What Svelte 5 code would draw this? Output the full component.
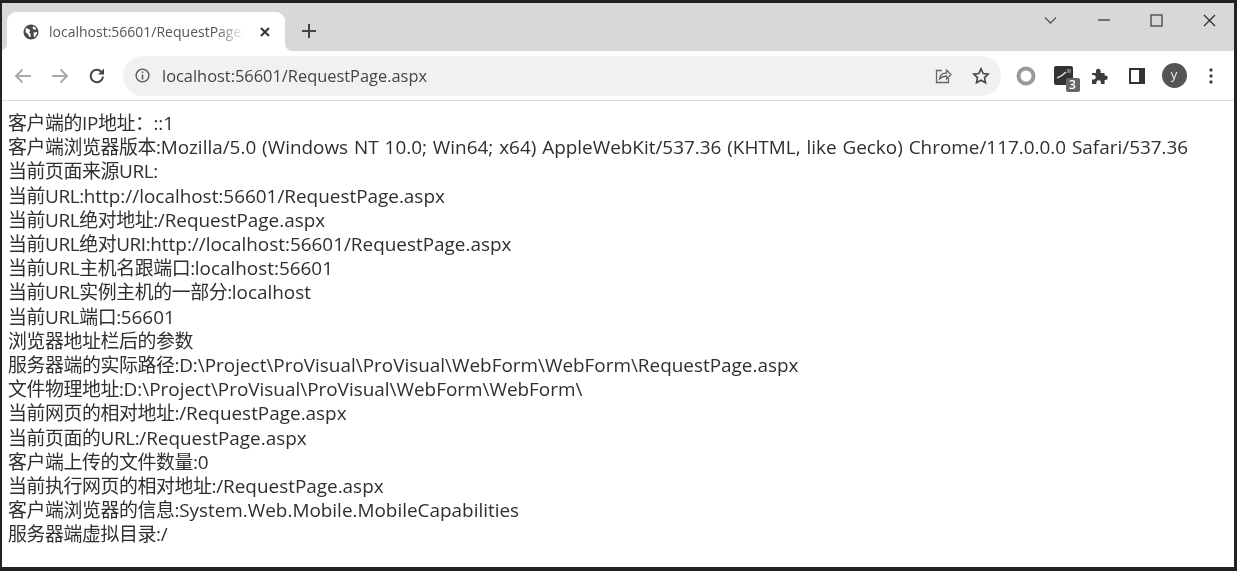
<script lang="ts">
  const lines = [
    ['客户端的IP地址：', '::1'],
    ['客户端浏览器版本:', 'Mozilla/5.0 (Windows NT 10.0; Win64; x64) AppleWebKit/537.36 (KHTML, like Gecko) Chrome/117.0.0.0 Safari/537.36'],
    ['当前页面来源URL:', ''],
    ['当前URL:', 'http://localhost:56601/RequestPage.aspx'],
    ['当前URL绝对地址:', '/RequestPage.aspx'],
    ['当前URL绝对URI:', 'http://localhost:56601/RequestPage.aspx'],
    ['当前URL主机名跟端口:', 'localhost:56601'],
    ['当前URL实例主机的一部分:', 'localhost'],
    ['当前URL端口:', '56601'],
    ['浏览器地址栏后的参数', ''],
    ['服务器端的实际路径:', 'D:\\Project\\ProVisual\\ProVisual\\WebForm\\WebForm\\RequestPage.aspx'],
    ['文件物理地址:', 'D:\\Project\\ProVisual\\ProVisual\\WebForm\\WebForm\\'],
    ['当前网页的相对地址:', '/RequestPage.aspx'],
    ['当前页面的URL:', '/RequestPage.aspx'],
    ['客户端上传的文件数量:', '0'],
    ['当前执行网页的相对地址:', '/RequestPage.aspx'],
    ['客户端浏览器的信息:', 'System.Web.Mobile.MobileCapabilities'],
    ['服务器端虚拟目录:', '/'],
  ];
</script>

<div class="window">
  <div class="tabstrip">
    <div class="tab">
      <svg class="favicon" width="16" height="16" viewBox="0 0 18 18">
        <circle cx="9" cy="9" r="8.500" fill="#4a4a4a" />
        <path d="M3 4.500l3.500 1.200 1.500 2-1 1.800 1.500 1.500v3.500l-1.500.2-1-3-3-2.500zM11 2.500l3 1.500 1 2-2.500.5-1.500-1.500zM12 9.500l3.500-.5.500 1.500-2.500 4-1.500-.5z" fill="#fff" />
      </svg>
      <span class="tab-title">localhost:56601/RequestPage.aspx</span>
      <svg class="tab-close" width="12" height="12" viewBox="0 0 12 12">
        <path d="M2 2l8 8M10 2l-8 8" stroke="#333" stroke-width="2" fill="none" />
      </svg>
    </div>
    <svg class="newtab" width="16" height="16" viewBox="0 0 16 16">
      <path d="M8 1v14M1 8h14" stroke="#444" stroke-width="2" fill="none" />
    </svg>
    <div class="spacer"></div>
    <div class="winctl">
      <span><svg width="13" height="9" viewBox="0 0 13 9"><path d="M1 1.500l5.500 5.500 5.500-5.500" stroke="#555" stroke-width="1.300" fill="none" /></svg></span>
      <span><svg width="14" height="12" viewBox="0 0 14 12"><path d="M1 6h12" stroke="#444" stroke-width="1.400" fill="none" /></svg></span>
      <span><svg width="13" height="13" viewBox="0 0 13 13"><rect x="1" y="1" width="11" height="11" stroke="#444" stroke-width="1.300" fill="none" /></svg></span>
      <span><svg width="13" height="13" viewBox="0 0 13 13"><path d="M1 1l11 11M12 1L1 12" stroke="#333" stroke-width="1.400" fill="none" /></svg></span>
    </div>
  </div>

  <div class="toolbar">
    <svg class="nav" width="18" height="16" viewBox="0 0 18 16"><path d="M17 8H2M8.500 1.500L2 8l6.500 6.500" stroke="#a8a8a8" stroke-width="1.900" fill="none" /></svg>
    <svg class="nav" width="18" height="16" viewBox="0 0 18 16"><path d="M1 8h15M9.500 1.500L16 8l-6.500 6.500" stroke="#a8a8a8" stroke-width="1.900" fill="none" /></svg>
    <svg class="nav" width="18" height="18" viewBox="0 0 18 18">
      <path d="M15 9.500A6.200 6.200 0 1 1 13.200 4.600" stroke="#444" stroke-width="2" fill="none" />
      <path d="M16 1.500V7.500H10z" fill="#444" />
    </svg>
    <div class="omnibox">
      <svg width="15" height="15" viewBox="0 0 15 15">
        <circle cx="7.500" cy="7.500" r="6.400" stroke="#555" stroke-width="1.400" fill="none" />
        <path d="M7.500 6.500v5M7.500 3.500v1.600" stroke="#555" stroke-width="1.500" fill="none" />
      </svg>
      <span class="url">localhost:56601/RequestPage.aspx</span>
      <div class="spacer"></div>
      <svg class="share" width="18" height="18" viewBox="0 0 18 18">
        <path d="M8 3.500H2.500v12h12V11" stroke="#666" stroke-width="1.300" fill="none" />
        <path d="M5.500 12c.5-4 3-6 7-6V3l4.500 4.500L12.500 12V9c-3 0-5 1-7 3z" stroke="#666" stroke-width="1.300" fill="#f1f1f1" />
      </svg>
      <svg width="18" height="18" viewBox="0 0 18 18">
        <path d="M9 1.800l2.200 4.700 5 .6-3.700 3.500 1 5.100L9 13.200l-4.500 2.500 1-5.100L1.800 7.100l5-.6z" stroke="#444" stroke-width="1.600" fill="none" />
      </svg>
    </div>
    <div class="exts">
      <span class="slot"><svg width="20" height="20" viewBox="0 0 20 20"><circle cx="10" cy="10" r="7.500" stroke="#9a9a9a" stroke-width="4" fill="none" /></svg></span>
      <span class="slot">
        <span class="ext-box">
          <svg width="19" height="19" viewBox="0 0 19 19">
            <rect width="19" height="19" rx="2" fill="#333" />
            <path d="M3 12c3-1 6-3 9-6" stroke="#ddd" stroke-width="1.600" fill="none" />
            <rect x="13" y="3" width="4" height="4" fill="#777" />
          </svg>
          <span class="badge">3</span>
        </span>
      </span>
      <span class="slot"><svg width="18" height="18" viewBox="0 0 18 18">
        <path d="M1 6h4V4a2.300 2.300 0 0 1 4.600 0v2h4v2.500h.9a2.300 2.300 0 0 1 0 4.600h-.9V17H10v-1.500a2.300 2.300 0 0 0-4.600 0V17H1v-4.500h1.500a2.300 2.300 0 0 0 0-4.600H1z" fill="#3c3c3c" />
      </svg></span>
      <span class="slot"><svg width="16" height="16" viewBox="0 0 16 16">
        <rect x="1" y="1" width="14" height="14" stroke="#333" stroke-width="2" fill="#fff" />
        <rect x="10" y="1" width="5" height="14" fill="#333" />
      </svg></span>
      <span class="slot"><span class="avatar">y</span></span>
      <span class="slot"><svg width="4" height="16" viewBox="0 0 4 16">
        <circle cx="2" cy="2" r="1.700" fill="#444" />
        <circle cx="2" cy="8" r="1.700" fill="#444" />
        <circle cx="2" cy="14" r="1.700" fill="#444" />
      </svg></span>
    </div>
  </div>

  <div class="page">
    {#each lines as [label, value]}
      <div><span class="label">{label}</span>{value}</div>
    {/each}
  </div>
</div>

<style>
  :global(body) {
    margin: 0;
    background: #fff;
  }
  .window {
    box-sizing: border-box;
    width: 1237px;
    height: 571px;
    border: solid #222;
    border-width: 3px 3px 4px 2px;
    background: #fff;
    font-family: "Open Sans", "Noto Sans CJK SC", sans-serif;
    overflow: hidden;
    filter: blur(0.35px);
  }
  .tabstrip {
    display: flex;
    align-items: flex-end;
    height: 48px;
    padding-left: 5px;
    background: #d8d8d8;
    box-sizing: border-box;
  }
  .tab {
    position: relative;
    display: flex;
    align-items: center;
    width: 278px;
    height: 39px;
    box-sizing: border-box;
    padding: 0 14px 0 16px;
    background: #fff;
    border-radius: 9px 9px 0 0;
  }
  .tab::before,
  .tab::after {
    content: "";
    position: absolute;
    bottom: 0;
    width: 8px;
    height: 8px;
  }
  .tab::before {
    left: -8px;
    background: radial-gradient(circle at 0 0, #d8d8d8 8px, #fff 8.5px);
  }
  .tab::after {
    right: -8px;
    background: radial-gradient(circle at 100% 0, #d8d8d8 8px, #fff 8.5px);
  }
  .favicon {
    flex-shrink: 0;
  }
  .tab-title {
    flex: 1;
    margin: 0 14px 0 10px;
    overflow: hidden;
    white-space: nowrap;
    font-size: 14px;
    color: #555;
    -webkit-mask-image: linear-gradient(to right, #000 85%, transparent);
    mask-image: linear-gradient(to right, #000 85%, transparent);
  }
  .newtab {
    align-self: center;
    margin: 7px 0 0 16px;
  }
  .spacer {
    flex: 1;
  }
  .winctl {
    display: flex;
    align-self: flex-start;
    margin: 7px -2px 0 0;
  }
  .winctl span {
    display: flex;
    align-items: center;
    justify-content: center;
    width: 53px;
    height: 20px;
  }
  .toolbar {
    display: flex;
    align-items: center;
    height: 50px;
    box-sizing: border-box;
    padding-left: 12px;
    border-bottom: 1px solid #d8d8d8;
  }
  .nav {
    flex-shrink: 0;
    margin-right: 19px;
  }
  .omnibox {
    display: flex;
    align-items: center;
    gap: 12px;
    width: 878px;
    height: 40px;
    box-sizing: border-box;
    margin-left: -2px;
    padding: 0 11px 0 12px;
    border-radius: 20px;
    background: #f1f1f1;
  }
  .share {
    margin-right: 8px;
  }
  .url {
    font-size: 16.4px;
    color: #444;
  }
  .exts {
    display: flex;
    align-items: center;
    margin-left: 6.5px;
  }
  .slot {
    display: flex;
    align-items: center;
    justify-content: center;
    width: 37px;
  }
  .ext-box {
    position: relative;
    display: flex;
    width: 19px;
    height: 19px;
  }
  .badge {
    position: absolute;
    right: -7px;
    bottom: -7px;
    width: 14px;
    height: 14px;
    border-radius: 2px;
    background: #666;
    color: #fff;
    font-size: 12px;
    font-weight: 600;
    line-height: 14px;
    text-align: center;
  }
  .avatar {
    width: 25px;
    height: 25px;
    border-radius: 50%;
    background: #555;
    color: #eee;
    font-size: 13px;
    line-height: 22px;
    text-align: center;
  }
  .page {
    padding: 10px 0 0 6px;
    font-size: 18.92px;
    line-height: 24.2px;
    word-spacing: 1px;
    color: #2f2f2f;
    white-space: nowrap;
  }
  .label {
    letter-spacing: -0.4px;
  }
</style>
